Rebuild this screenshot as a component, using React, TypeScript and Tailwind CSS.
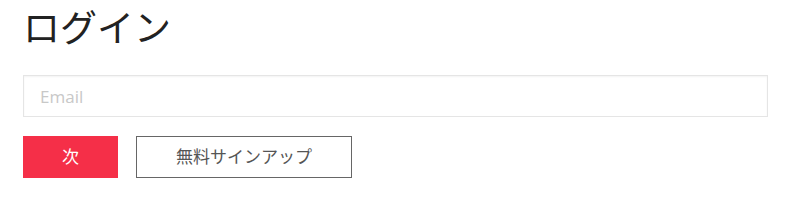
export default function App() {
  return (
    <div className="min-h-[215px] bg-white px-[23px] pt-[3px] font-['Open_Sans','Noto_Sans_CJK_JP',sans-serif]">
      <h1 className="text-[37px] leading-[49px] font-normal text-[#222]">ログイン</h1>
      <input
        type="email"
        placeholder="Email"
        className="mt-[23px] block h-[42px] w-[745px] border border-[#e5e5e5] bg-white px-[16px] text-[17px] text-[#333] shadow-[inset_0_1px_2px_rgba(0,0,0,0.05)] outline-none placeholder:text-[#c8c8c8]"
      />
      <div className="mt-[19px] flex gap-[18px]">
        <button className="h-[42px] w-[95px] bg-[#f52f48] text-[17px] text-white">次</button>
        <button className="h-[42px] w-[216px] border border-[#666] bg-white text-[17px] text-[#555]">
          無料サインアップ
        </button>
      </div>
    </div>
  );
}
